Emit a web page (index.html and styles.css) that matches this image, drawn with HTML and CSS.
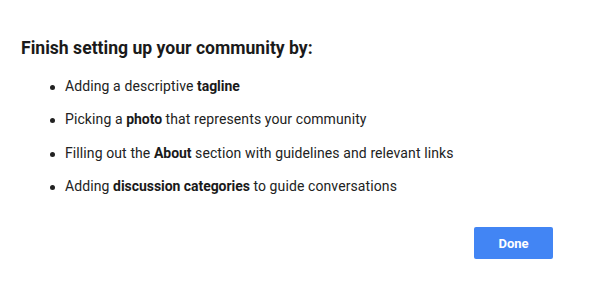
FILE: index.html
```html
<!DOCTYPE html>
<html>
<head>
<meta charset="utf-8">
<link rel="stylesheet" href="styles.css">
</head>
<body>
<div class="dialog">
  <h1 class="title">Finish setting up your community by:</h1>
  <ul class="steps">
    <li class="step">Adding a descriptive <b>tagline</b></li>
    <li class="step">Picking a <b>photo</b> that represents your community</li>
    <li class="step">Filling out the <b>About</b> section with guidelines and relevant links</li>
    <li class="step">Adding <b>discussion categories</b> to guide conversations</li>
  </ul>
  <div class="actions">
    <button class="done">Done</button>
  </div>
</div>
</body>
</html>
```
FILE: styles.css
```css
html, body {
  margin: 0;
  padding: 0;
  background: #ffffff;
}
.dialog {
  font-family: Roboto, "Noto Sans", sans-serif;
  padding: 38px 41px 0 21px;
  color: #222222;
}
.title {
  margin: 0;
  font-size: 17.6px;
  line-height: 20px;
  font-weight: 700;
  color: #1a1a1a;
}
.steps {
  list-style: none;
  margin: 12px 0 0 0;
  padding: 0 0 0 44px;
}
.step {
  position: relative;
  font-size: 14px;
  line-height: 33.33px;
  letter-spacing: 0.1px;
}
.step::before {
  content: "";
  position: absolute;
  left: -15px;
  top: 15px;
  width: 5px;
  height: 5px;
  border-radius: 50%;
  background: #222222;
}
.step b {
  font-weight: 700;
  letter-spacing: -0.05px;
  color: #1a1a1a;
}
.actions {
  display: flex;
  justify-content: flex-end;
  margin-top: 23.7px;
}
.done {
  width: 79px;
  height: 32px;
  border: none;
  border-radius: 2px;
  background: #4285f4;
  color: #ffffff;
  font-family: Roboto, "Noto Sans", sans-serif;
  font-size: 13px;
  font-weight: 700;
  padding: 0;
}
```
